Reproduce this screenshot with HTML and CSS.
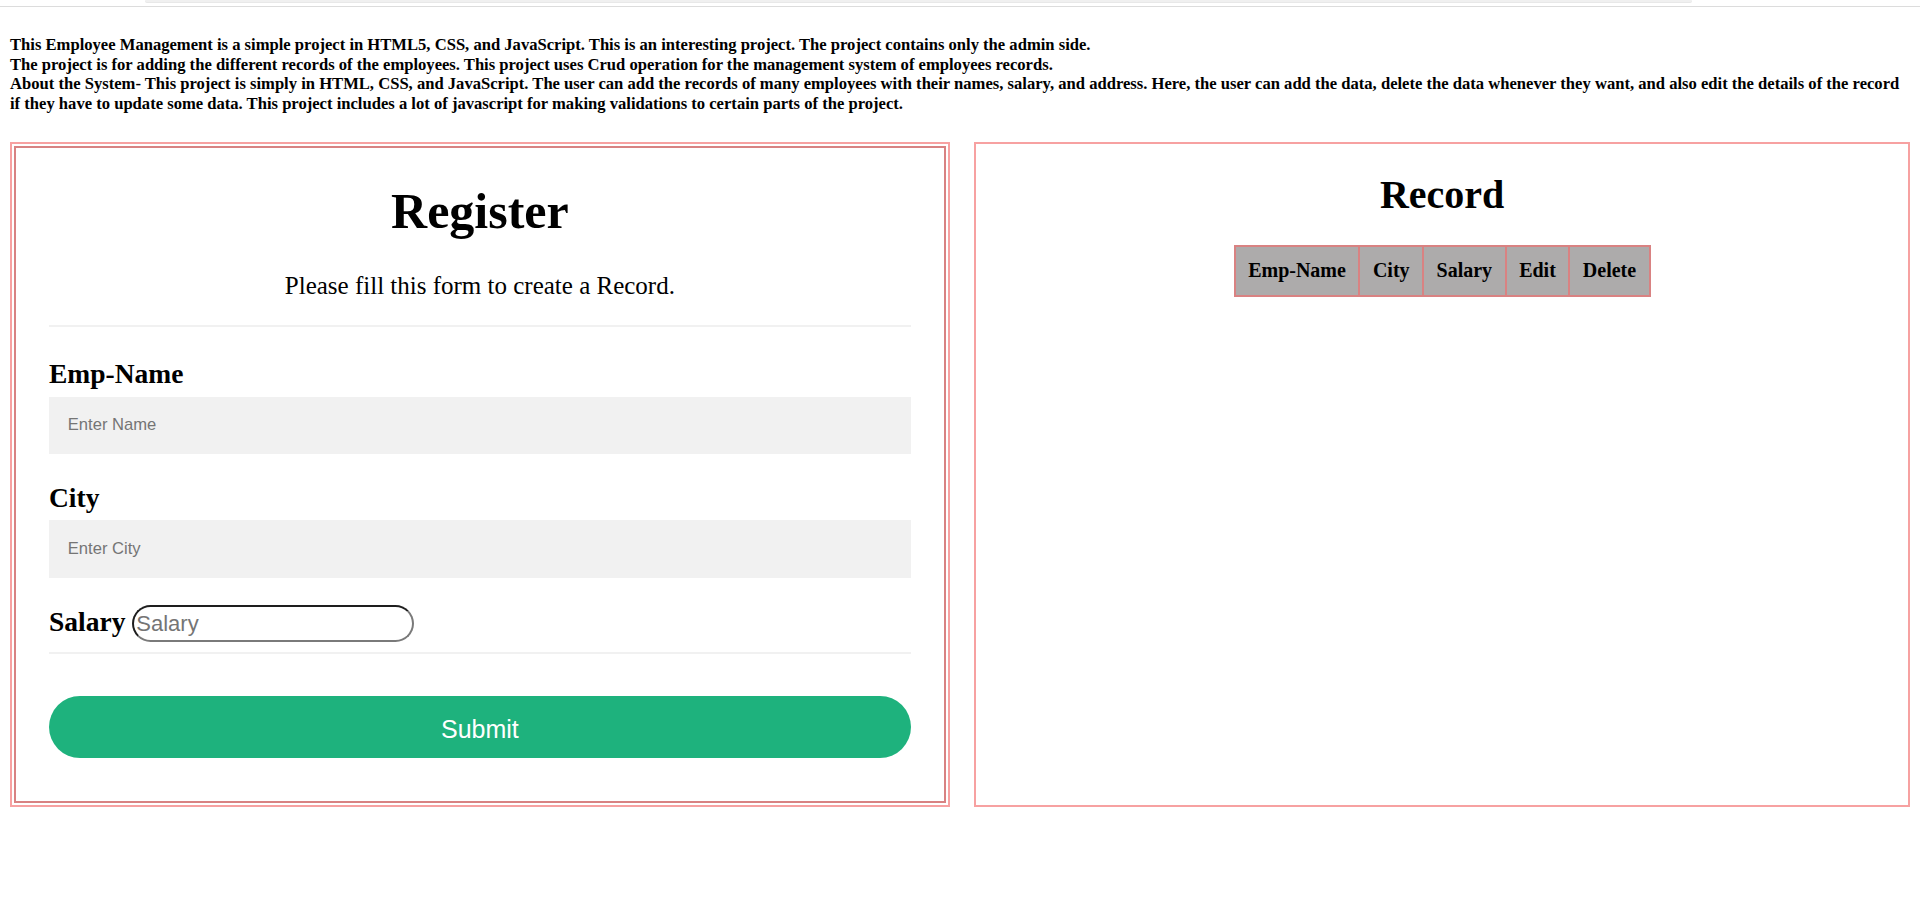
FILE: index.html
```html
<!DOCTYPE html>
<html lang="en">
<head>
<meta charset="utf-8">
<title>Employee Management</title>
<link rel="stylesheet" href="styles.css">
</head>
<body>
<div class="chrome"><div class="chrome-tab"></div></div>
<main class="page">
  <h5 class="intro">This Employee Management is a simple project in HTML5, CSS, and JavaScript. This is an interesting project. The project contains only the admin side.<br>The project is for adding the different records of the employees. This project uses Crud operation for the management system of employees records.<br>About the System- This project is simply in HTML, CSS, and JavaScript. The user can add the records of many employees with their names, salary, and address. Here, the user can add the data, delete the data whenever they want, and also edit the details of the record<br>if they have to update some data. This project includes a lot of javascript for making validations to certain parts of the project.</h5>

  <div class="columns">
    <section class="panel panel-form">
      <form class="form-inner" onsubmit="return false;">
        <h1 class="register-title">Register</h1>
        <p class="sub">Please fill this form to create a Record.</p>
        <hr class="rule rule-top">
        <label class="field-label" for="name">Emp-Name</label>
        <input class="text-input input-name" id="name" type="text" placeholder="Enter Name">
        <label class="field-label label-city" for="city">City</label>
        <input class="text-input input-city" id="city" type="text" placeholder="Enter City">
        <div class="salary-row">
          <label class="field-label inline-label" for="salary">Salary</label>
          <input class="salary-input" id="salary" type="number" placeholder="Salary">
        </div>
        <hr class="rule rule-bottom">
        <button class="submit-btn" type="submit">Submit</button>
      </form>
    </section>

    <section class="panel panel-record">
      <h1 class="record-title">Record</h1>
      <table class="record-table">
        <thead>
          <tr>
            <th>Emp-Name</th>
            <th>City</th>
            <th>Salary</th>
            <th>Edit</th>
            <th>Delete</th>
          </tr>
        </thead>
        <tbody></tbody>
      </table>
    </section>
  </div>
</main>
</body>
</html>
```

FILE: styles.css
```css
* {
  box-sizing: border-box;
}

html, body {
  margin: 0;
  padding: 0;
  background: #ffffff;
}

body {
  font-family: "Liberation Serif", "Times New Roman", serif;
  color: #000;
}

.chrome {
  height: 7px;
  border-bottom: 1px solid #dcdcdc;
}

.chrome-tab {
  height: 2px;
  margin: 0 228px 0 145px;
  background: #f0f0f0;
  border-bottom-left-radius: 6px;
  border-bottom-right-radius: 6px;
  box-shadow: 0 1px 0 #e8e8e8;
}

.page {
  padding: 0 10px;
}

.intro {
  margin: 28.2px 0 28.4px;
  font-size: 16.6px;
  line-height: 19.6px;
  font-weight: 700;
  white-space: nowrap;
}

.columns {
  display: flex;
  gap: 24.5px;
  height: 665px;
}

.panel {
  flex: 1 1 0;
  min-width: 0;
  border: 2px solid #f7a1a1;
}

.panel-form {
  display: flex;
  padding: 2px;
}

.form-inner {
  flex: 1;
  margin: 0;
  border: 2px solid #d88282;
  padding: 0 33px;
  display: flex;
  flex-direction: column;
}

.register-title {
  margin: 35.4px 0 0;
  font-size: 50px;
  line-height: 57.5px;
  font-weight: 700;
  text-align: center;
}

.sub {
  margin: 30.5px 0 0;
  font-size: 25px;
  line-height: 29px;
  text-align: center;
}

.rule {
  margin: 0;
  height: 2px;
  border: 0;
  background: #f1f1f1;
}

.rule-top {
  margin-top: 24.6px;
}

.field-label {
  display: block;
  margin-top: 31.2px;
  font-size: 27.5px;
  line-height: 31.6px;
  font-weight: 700;
}

.label-city {
  margin-top: 27.6px;
}

.text-input {
  display: block;
  width: 100%;
  height: 57.5px;
  margin-top: 6.9px;
  padding: 0 18.75px;
  border: 0;
  background: #f1f1f1;
  font-family: "Liberation Sans", Arial, sans-serif;
  font-size: 16.6px;
  color: #000;
  outline: none;
}

.input-city {
  margin-top: 6.8px;
}

.text-input::placeholder {
  color: #757575;
}

.salary-row {
  display: flex;
  align-items: baseline;
  margin-top: 27.3px;
  gap: 6.4px;
}

.inline-label {
  margin-top: 0;
}

.salary-input {
  width: 282px;
  height: 37.3px;
  padding: 0 2.5px;
  border-width: 2px;
  border-style: solid;
  border-color: #1e1e1e #7a7a7a #7a7a7a #1e1e1e;
  border-radius: 18.6px;
  background: #fff;
  font-family: "Liberation Sans", Arial, sans-serif;
  font-size: 22px;
  color: #000;
  outline: none;
  -moz-appearance: textfield;
}

.salary-input::-webkit-outer-spin-button,
.salary-input::-webkit-inner-spin-button {
  -webkit-appearance: none;
  margin: 0;
}

.salary-input::placeholder {
  color: #757575;
}

.rule-bottom {
  margin-top: 10px;
}

.submit-btn {
  display: flex;
  align-items: center;
  justify-content: center;
  width: 100%;
  height: 61.7px;
  margin-top: 41.7px;
  padding: 6px 0 0;
  border: 0;
  border-radius: 31px;
  background: #1eb27d;
  color: #ffffff;
  font-family: "Liberation Sans", Arial, sans-serif;
  font-size: 25px;
  cursor: pointer;
}

.record-title {
  margin: 28.4px 0 26.6px;
  font-size: 40px;
  line-height: 46px;
  font-weight: 700;
  text-align: center;
}

.record-table {
  margin: 0 auto;
  border-collapse: separate;
  border-spacing: 0;
  border: 2px solid #d98282;
  background: #adabab;
}

.record-table th {
  padding: 12.5px 12.5px;
  font-size: 20px;
  line-height: 23px;
  font-weight: 700;
  border-left: 2px solid #d98282;
}

.record-table th:first-child {
  border-left: 0;
}
```
